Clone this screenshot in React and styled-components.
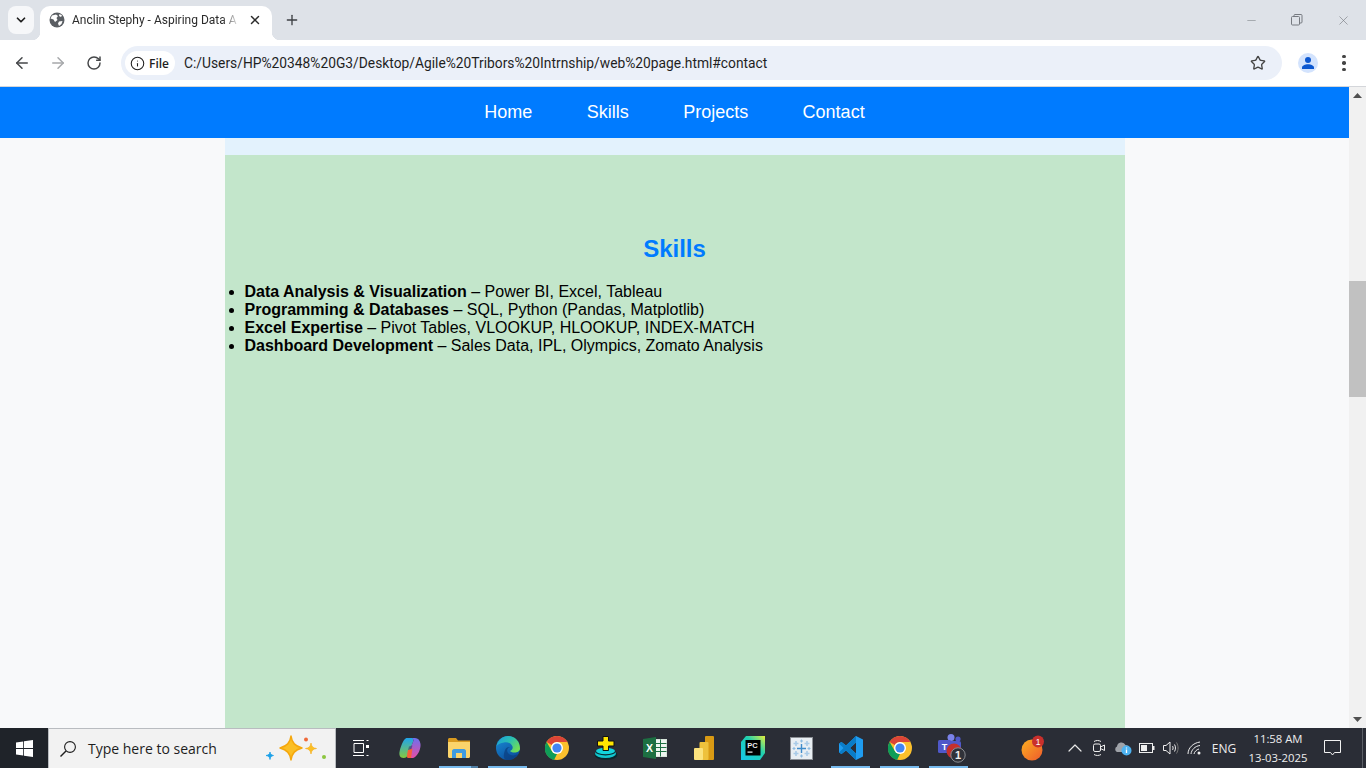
import React from "react";
import styled, { createGlobalStyle } from "styled-components";
import { ArrowLeft, ArrowRight, RotateCw, Star, Info, X, Plus, ChevronDown, Minus, ChevronUp } from "lucide-react";

const GlobalStyle = createGlobalStyle`
  html, body {
    margin: 0;
    padding: 0;
    height: 100%;
    overflow: hidden;
  }
  #root {
    height: 100%;
  }
`;

const Screen = styled.div`
  width: 1366px;
  height: 768px;
  display: flex;
  flex-direction: column;
  overflow: hidden;
  font-family: "Liberation Sans", Arial, sans-serif;
`;

/* browser tab strip */
const TabStrip = styled.div`
  height: 40px;
  flex: none;
  display: flex;
  align-items: flex-end;
  background: #dee2e8;
  padding-left: 8px;
`;

const TabSearch = styled.div`
  width: 26px;
  height: 28px;
  margin-bottom: 6px;
  margin-right: 6px;
  border-radius: 8px;
  background: #f6f7f9;
  display: flex;
  align-items: center;
  justify-content: center;
  color: #1f1f1f;
`;

const Tab = styled.div`
  position: relative;
  width: 232px;
  height: 34px;
  box-sizing: border-box;
  padding: 0 9px 6px 9px;
  display: flex;
  align-items: center;
  background: #fff;
  border-radius: 10px 10px 0 0;
  &::before,
  &::after {
    content: "";
    position: absolute;
    bottom: 0;
    width: 8px;
    height: 8px;
    background: radial-gradient(circle at 0 0, #dee2e8 8px, #fff 8.5px);
  }
  &::before {
    left: -8px;
  }
  &::after {
    right: -8px;
    transform: scaleX(-1);
  }
`;

const TabTitle = styled.span`
  width: 168px;
  margin-left: 7px;
  overflow: hidden;
  white-space: nowrap;
  font-family: Roboto, sans-serif;
  font-size: 12px;
  color: #2b2b2b;
  -webkit-mask-image: linear-gradient(to right, #000 150px, transparent 168px);
  mask-image: linear-gradient(to right, #000 150px, transparent 168px);
`;

const TabClose = styled.div`
  margin-left: auto;
  display: flex;
  color: #2b2b2b;
  margin-right: 1px;
`;

const NewTab = styled.div`
  margin: 0 0 12px 12px;
  display: flex;
  color: #3c3f43;
`;

const WindowControls = styled.div`
  margin-left: auto;
  align-self: stretch;
  display: flex;
  align-items: center;
`;

const WindowButton = styled.div`
  width: 46px;
  height: 40px;
  display: flex;
  align-items: center;
  justify-content: center;
  color: #767a80;
`;

/* address bar row */
const Toolbar = styled.div`
  height: 46px;
  flex: none;
  display: flex;
  align-items: center;
  background: #fff;
  border-radius: 8px 8px 0 0;
  border-bottom: 1px solid #d4d6da;
  padding-left: 4px;
`;

const NavButton = styled.div`
  width: 36px;
  height: 36px;
  display: flex;
  align-items: center;
  justify-content: center;
  color: ${(p) => (p.$disabled ? "#a6a8ab" : "#454749")};
`;

const Omnibox = styled.div`
  width: 1161px;
  height: 34px;
  margin-left: 9px;
  box-sizing: border-box;
  padding: 0 16px 0 4px;
  display: flex;
  align-items: center;
  background: #ebf0f9;
  border-radius: 17px;
  font-family: Roboto, sans-serif;
`;

const SchemeChip = styled.div`
  width: 50px;
  height: 24px;
  box-sizing: border-box;
  padding-left: 5px;
  display: flex;
  align-items: center;
  gap: 4px;
  background: #fff;
  border-radius: 12px;
  font-family: "Open Sans", sans-serif;
  font-size: 12px;
  font-weight: 600;
  color: #1f1f1f;
`;

const UrlText = styled.span`
  margin-left: 9px;
  font-size: 13.8px;
  color: #1f1f1f;
`;

const OmniStar = styled.div`
  margin-left: auto;
  display: flex;
  color: #444;
`;

const Avatar = styled.div`
  width: 20px;
  height: 20px;
  margin-left: 16px;
  border-radius: 50%;
  background: #d3e3fd;
  display: flex;
  align-items: center;
  justify-content: center;
`;

const MenuDots = styled.div`
  margin-left: 24px;
  display: flex;
  flex-direction: column;
  gap: 3px;
  span {
    width: 3.5px;
    height: 3.5px;
    border-radius: 50%;
    background: #444;
  }
`;

/* the page itself */
const Viewport = styled.div`
  flex: 1;
  min-height: 0;
  display: flex;
  background: #f8f9fa;
`;

const PageColumn = styled.div`
  flex: 1;
  min-width: 0;
  display: flex;
  flex-direction: column;
`;

const Nav = styled.nav`
  height: 51px;
  flex: none;
  display: flex;
  align-items: center;
  justify-content: center;
  gap: 54.4px;
  background: #007bff;
`;

const NavLink = styled.a`
  font-size: 18px;
  color: #fff;
  text-decoration: none;
`;

const Content = styled.main`
  width: 900px;
  flex: 1;
  margin: 0 auto;
  display: flex;
  flex-direction: column;
  background: #e3f2fd;
  padding-top: 17px;
`;

const SkillsSection = styled.section`
  flex: 1;
  background: #c3e6cb;
  padding: 80px 0 0;
`;

const SectionTitle = styled.h2`
  margin: 0 0 20px;
  text-align: center;
  font-size: 24px;
  line-height: 28px;
  font-weight: bold;
  color: #007bff;
`;

const SkillList = styled.ul`
  margin: 0;
  padding: 0 0 0 20px;
  font-size: 16px;
  line-height: 18px;
  color: #000;
`;

const Scrollbar = styled.div`
  width: 17px;
  flex: none;
  display: flex;
  flex-direction: column;
  background: #f1f1f1;
`;

const ScrollArrow = styled.div`
  height: 17px;
  flex: none;
  display: flex;
  align-items: center;
  justify-content: center;
  margin-top: ${(p) => (p.$down ? "auto" : "0")};
`;

const ScrollThumb = styled.div`
  height: 116px;
  flex: none;
  margin-top: 177px;
  background: #c1c1c1;
`;

/* windows taskbar */
const Taskbar = styled.div`
  height: 40px;
  flex: none;
  display: flex;
  align-items: stretch;
  background: #2a2d36;
`;

const StartButton = styled.div`
  width: 48px;
  flex: none;
  display: flex;
  align-items: center;
  justify-content: center;
  background: #1f2329;
`;

const SearchBox = styled.div`
  width: 288px;
  flex: none;
  box-sizing: border-box;
  padding: 0 8px 0 10px;
  display: flex;
  align-items: center;
  background: #f2f2f2;
  border: 1px solid #b9bcc0;
  border-bottom: none;
  font-family: "Open Sans", sans-serif;
  font-size: 14px;
  color: #1e1e1e;
`;

const SearchLabel = styled.span`
  margin-left: 11px;
`;

const SearchSpark = styled.div`
  margin-left: auto;
  display: flex;
`;

const TaskButton = styled.div`
  position: relative;
  width: 49px;
  flex: none;
  display: flex;
  align-items: center;
  justify-content: center;
  &::after {
    content: "";
    display: ${(p) => (p.$open || p.$stacked ? "block" : "none")};
    position: absolute;
    left: 5px;
    right: 5px;
    bottom: 0;
    height: 2px;
    background: ${(p) =>
      p.$stacked
        ? "linear-gradient(to right, #76b9ed 32px, #4f7da3 32px)"
        : "#76b9ed"};
  }
`;

const Tray = styled.div`
  margin-left: auto;
  display: flex;
  align-items: center;
  color: #e8e8e8;
`;

const TrayIcon = styled.div`
  width: ${(p) => p.$w || 24}px;
  margin-left: ${(p) => p.$gap || 0}px;
  display: flex;
  align-items: center;
  justify-content: center;
`;

const LangLabel = styled.span`
  width: 34px;
  text-align: center;
  font-family: "Open Sans", sans-serif;
  font-size: 12px;
  color: #eee;
`;

const Clock = styled.div`
  width: 74px;
  text-align: center;
  font-family: "Open Sans", sans-serif;
  font-size: 11.3px;
  line-height: 19px;
  color: #eee;
`;

const DesktopEdge = styled.div`
  width: 1px;
  height: 100%;
  margin-left: 13px;
  margin-right: 3px;
  background: #5b5f66;
`;

const skills = [
  ["Data Analysis & Visualization", "Power BI, Excel, Tableau"],
  ["Programming & Databases", "SQL, Python (Pandas, Matplotlib)"],
  ["Excel Expertise", "Pivot Tables, VLOOKUP, HLOOKUP, INDEX-MATCH"],
  ["Dashboard Development", "Sales Data, IPL, Olympics, Zomato Analysis"],
];

const GlobeIcon = () => (
  <svg width="16" height="16" viewBox="0 0 16 16">
    <circle cx="8" cy="8" r="7.5" fill="#5a5e63" />
    <path d="M3 3.5 7 2.5 9 4 7.5 6 8.5 8 6 10 4.5 7.5 1.5 6.5Z" fill="#fff" />
    <path d="M10 9.5 13.5 9 12.5 12 10 14 9 11.5Z" fill="#fff" />
    <path d="M10.5 2 13 3.5 12 5 10 4Z" fill="#fff" />
  </svg>
);

const RestoreIcon = () => (
  <svg width="12" height="12" viewBox="0 0 12 12" fill="none" stroke="currentColor">
    <rect x="0.5" y="2.5" width="8" height="8.5" rx="1" />
    <path d="M3 2.5V1.5a1 1 0 0 1 1-1h6a1 1 0 0 1 1 1V8a1 1 0 0 1-1 1H8.5" />
  </svg>
);

const PersonIcon = () => (
  <svg width="14" height="14" viewBox="0 0 14 14" fill="#0b57d0">
    <circle cx="7" cy="4" r="3" />
    <path d="M1 13v-1.5C1 9.5 4 8.2 7 8.2s6 1.3 6 3.3V13Z" />
  </svg>
);

const WindowsLogo = () => (
  <svg width="17" height="17" viewBox="0 0 17 17" fill="#fff">
    <path d="M0 2.4 7.2 1.4V8H0Z" />
    <path d="M8 1.3 17 0V8H8Z" />
    <path d="M0 9H7.2V15.6L0 14.6Z" />
    <path d="M8 9H17V17L8 15.7Z" />
  </svg>
);

const SearchGlass = () => (
  <svg width="18" height="18" viewBox="0 0 18 18" fill="none" stroke="#1e1e1e" strokeWidth="1.1">
    <circle cx="11" cy="7" r="5.4" />
    <path d="M7 11 1.5 16.5" strokeWidth="1.4" />
  </svg>
);

const Sparkles = () => (
  <svg width="62" height="28" viewBox="0 0 62 28">
    <path d="M26 1C27 8 30 11 37 13 30 15 27 18 26 25 25 18 22 15 15 13 22 11 25 8 26 1Z" fill="#fbbf24" stroke="#f5a70c" strokeWidth="1.5" strokeLinejoin="round" />
    <path d="M46 8C46.5 11.5 48 13 51.5 13.5 48 14 46.5 15.5 46 19 45.5 15.5 44 14 40.5 13.5 44 13 45.5 11.5 46 8Z" fill="#fbbf24" stroke="#f5a70c" strokeWidth=".6" />
    <path d="M5 17C5.4 19 6 20 8.5 20.5 6 21 5.4 22 5 24.5 4.6 22 4 21 1 20.5 4 20 4.6 19 5 17Z" fill="#1da1e8" stroke="#1da1e8" strokeWidth=".8" />
    <circle cx="41" cy="4.5" r="2" fill="#ef6a3a" />
    <circle cx="59" cy="22" r="2" fill="#8cc63f" />
  </svg>
);

const TaskViewIcon = () => (
  <svg width="16" height="16" viewBox="0 0 16 16" fill="none" stroke="#fff" strokeWidth="1">
    <path d="M0 .5H11M0 15.5H11" />
    <path d="M1 3.5H10.5V12.5H1Z" />
    <path d="M13.5 .5H15.5M13.5 15.5H15.5" />
    <rect x="13" y="5" width="3" height="3" fill="#fff" stroke="none" />
  </svg>
);

const CopilotIcon = () => (
  <svg width="24" height="24" viewBox="0 0 24 24">
    <defs>
      <linearGradient id="cpA" x1="0.3" y1="0" x2="0.3" y2="1">
        <stop offset="0" stopColor="#1fa5ec" />
        <stop offset="1" stopColor="#86c83f" />
      </linearGradient>
      <linearGradient id="cpB" x1="0.5" y1="0" x2="0.5" y2="1">
        <stop offset="0" stopColor="#6d70ee" />
        <stop offset="1" stopColor="#e64da5" />
      </linearGradient>
    </defs>
    <path d="M9 2H14C15.5 2 15.5 3.5 15 6L10 19C9 21 8 22 5.5 22 2 22 1 19 1.5 16 2 12 5 5 6.5 3.5 7.5 2.5 8 2 9 2Z" fill="url(#cpA)" />
    <path d="M14 2H17C20 2 22 4 22.5 8 23 13 20 19 17 21 16 22 15 22 11 22 9 22 9 20 10 18L15 6C16 4 15 2.5 14 2Z" fill="url(#cpB)" />
    <path d="M10 14 14.5 12.5 13 22H10C8.5 22 9 18 10 14Z" fill="#f5603a" />
    <path d="M11 10.5 14.5 9.5 13.5 13 10 14Z" fill="#3a2f6e" opacity="0.55" />
  </svg>
);

const ExplorerIcon = () => (
  <svg width="22" height="20" viewBox="0 0 22 20">
    <path d="M0 1.5C0 .7.7 0 1.5 0H8L10 2.5H22V5H0Z" fill="#d99a1f" />
    <path d="M0 4H22V18.5C22 19.3 21.3 20 20.5 20H1.5C.7 20 0 19.3 0 18.5Z" fill="#fbd46b" />
    <path d="M4 20V13C4 12 5 11 6 11H16C17 11 18 12 18 13V20H14V15H8V20Z" fill="#3f9be0" />
  </svg>
);

const EdgeIcon = () => (
  <svg width="24" height="24" viewBox="0 0 24 24">
    <defs>
      <linearGradient id="edA" x1="0" y1="0" x2="1" y2="0.6">
        <stop offset="0" stopColor="#1a9be0" />
        <stop offset="0.55" stopColor="#2bc0b0" />
        <stop offset="1" stopColor="#6fdc58" />
      </linearGradient>
      <linearGradient id="edB" x1="0" y1="0" x2="0.6" y2="1">
        <stop offset="0" stopColor="#1a8fd8" />
        <stop offset="1" stopColor="#0b4f9e" />
      </linearGradient>
    </defs>
    <circle cx="12" cy="12" r="12" fill="url(#edB)" />
    <path d="M0.5 10C2 4 7 0 12 0 19 0 24 5.5 24 12.5 24 15 21.5 16.5 18.5 16.5 16 16.5 14.5 15.8 14 15 16.5 14 17 12 16.5 10.5 15 6.5 11 6 8 6.5 4.5 7 2 8 .5 10Z" fill="url(#edA)" />
    <path d="M11 24C6 23 8 17 9 14 10 11.5 12 10.5 14 11 11 12 10.5 15 12 17 14 20 19 20 22 18 20 22 15 24.5 11 24Z" fill="#0c3d7d" opacity="0.7" />
  </svg>
);

const ChromeIcon = () => (
  <svg width="24" height="24" viewBox="0 0 24 24">
    <circle cx="12" cy="12" r="12" fill="#fbc02d" />
    <path d="M12 0A12 12 0 0 1 22.4 6H12A6 6 0 0 0 6.8 9L1.6 6A12 12 0 0 1 12 0Z" fill="#dc4437" />
    <path d="M1.6 6 6.8 15A6 6 0 0 0 12 18L9 24A12 12 0 0 1 1.6 6Z" fill="#0f9d58" />
    <circle cx="12" cy="12" r="6" fill="#fff" />
    <circle cx="12" cy="12" r="4.6" fill="#4285f4" />
  </svg>
);

const PlusDiskIcon = () => (
  <svg width="24" height="24" viewBox="0 0 24 24">
    <ellipse cx="12" cy="19" rx="11.5" ry="4.8" fill="#08282e" />
    <ellipse cx="11.5" cy="17.8" rx="10.5" ry="4.2" fill="#12c6cf" />
    <ellipse cx="11.5" cy="15.8" rx="10" ry="3.6" fill="#08282e" />
    <ellipse cx="11.5" cy="15" rx="9.5" ry="3.2" fill="#12d4dc" />
    <path d="M9 .5H14.5V5H20V10H14.5V14.5H9V10H3.5V5H9Z" fill="#ffe600" stroke="#111" strokeWidth="1" />
  </svg>
);

const ExcelIcon = () => (
  <svg width="24" height="22" viewBox="0 0 24 22">
    <rect x="12" y="2.5" width="11.5" height="17" fill="#eef5f0" stroke="#d7e4db" />
    <path d="M17.5 2.5V19.5M12 6.5H23.5M12 10.5H23.5M12 14.5H23.5" stroke="#1d6f42" strokeWidth="1" />
    <path d="M0 2 13 0V22L0 20Z" fill="#1d6f42" />
    <text x="6.5" y="15" textAnchor="middle" fontFamily="Liberation Sans" fontWeight="bold" fontSize="10.5" fill="#fff">X</text>
  </svg>
);

const PowerBiIcon = () => (
  <svg width="20" height="24" viewBox="0 0 20 24">
    <rect x="11" y="0" width="9" height="24" rx="1" fill="#d99a14" />
    <rect x="5.5" y="6" width="9" height="18" rx="1" fill="#eec13c" />
    <rect x="0" y="12" width="9" height="12" rx="1" fill="#fbe27d" />
  </svg>
);

const PyCharmIcon = () => (
  <svg width="24" height="24" viewBox="0 0 24 24">
    <defs>
      <linearGradient id="pcA" x1="0" y1="1" x2="1" y2="0">
        <stop offset="0" stopColor="#16c5ea" />
        <stop offset="0.6" stopColor="#20d0b0" />
        <stop offset="1" stopColor="#e6ee3a" />
      </linearGradient>
    </defs>
    <path d="M5 0H24V17L19 24H0V6Z" fill="url(#pcA)" />
    <rect x="4.5" y="4" width="15" height="15.5" fill="#000" />
    <text x="11.5" y="12" textAnchor="middle" fontFamily="Liberation Sans" fontWeight="bold" fontSize="7.5" fill="#eee">PC</text>
    <rect x="6.5" y="15.5" width="5" height="1.2" fill="#eee" />
  </svg>
);

const TableauIcon = () => (
  <svg width="23" height="23" viewBox="0 0 23 23">
    <rect x=".5" y=".5" width="22" height="22" fill="#e8eef3" stroke="#8b8f95" />
    <g stroke="#a9cbe8" strokeWidth="1.6">
      <path d="M6 4V9M3.5 6.5H8.5M17 4V9M14.5 6.5H19.5M6 14V19M3.5 16.5H8.5M17 14V19M14.5 16.5H19.5" />
      <path d="M11.5 2.5V5.5M10 4H13M11.5 17.5V20.5M10 19H13M2.5 11.5H5.5M4 10V13M17.5 11.5H20.5M19 10V13" stroke="#8dbbe0" strokeWidth="1.1" />
    </g>
    <path d="M11.5 7V16M7 11.5H16" stroke="#3f8ccb" strokeWidth="1.4" />
  </svg>
);

const VsCodeIcon = () => (
  <svg width="24" height="24" viewBox="0 0 24 24">
    <path d="M17 0 24 3.5V20.5L17 24 7 14.5 2.5 18 0 16.5V7.5L2.5 6 7 9.5ZM17 6.5 11 12 17 17.5Z" fill="#1f9cf0" />
    <path d="M17 0V6.5L11 12 17 17.5V24L7 14.5 2.5 18 0 16.5 4.5 12 0 7.5 2.5 6 7 9.5Z" fill="#0a7cc7" />
  </svg>
);

const TeamsIcon = () => (
  <svg width="34" height="30" viewBox="0 0 34 30">
    <circle cx="19" cy="4.5" r="3.5" fill="#7b83eb" />
    <circle cx="26" cy="6" r="2.6" fill="#5059c9" />
    <rect x="17" y="8" width="12" height="11" rx="2" fill="#5059c9" />
    <rect x="6" y="7" width="13" height="13" rx="1.5" fill="#4f58ca" />
    <text x="12.5" y="17" textAnchor="middle" fontFamily="Liberation Sans" fontWeight="bold" fontSize="9" fill="#fff">T</text>
    <circle cx="22" cy="18" r="7.5" fill="#c4302b" />
    <circle cx="26" cy="22" r="7.2" fill="#303239" stroke="#8a8d92" strokeWidth="1" />
    <text x="26" y="26" textAnchor="middle" fontFamily="Liberation Sans" fontWeight="bold" fontSize="11" fill="#eee">1</text>
  </svg>
);

const OrangeBadge = () => (
  <svg width="26" height="28" viewBox="0 0 26 28">
    <defs>
      <linearGradient id="orA" x1="0" y1="0" x2="1" y2="1">
        <stop offset="0" stopColor="#fbb021" />
        <stop offset="1" stopColor="#ee5a2c" />
      </linearGradient>
    </defs>
    <circle cx="11" cy="16" r="10.5" fill="url(#orA)" />
    <circle cx="17" cy="7.5" r="6" fill="#c9302c" />
    <text x="17" y="10.5" textAnchor="middle" fontFamily="Liberation Sans" fontSize="8.5" fill="#fff">1</text>
  </svg>
);

const MeetIcon = () => (
  <svg width="14" height="18" viewBox="0 0 14 18" fill="none" stroke="#eee" strokeWidth="1">
    <rect x="1.5" y="5" width="7" height="7.5" rx="1.5" />
    <path d="M8.5 8 12.5 6V11.5L8.5 9.5" />
    <path d="M2 2.5C4 1.2 7 1.2 9 2.5M2 15.5C4 16.8 7 16.8 9 15.5" />
  </svg>
);

const CloudInfoIcon = () => (
  <svg width="18" height="16" viewBox="0 0 18 16">
    <path d="M3 12A3 3 0 0 1 3 6.5 4.5 4.5 0 0 1 11.5 5 3.5 3.5 0 0 1 14 11V12Z" fill="#9ea2a8" />
    <circle cx="12.5" cy="10.5" r="5" fill="#4db2f0" />
    <path d="M12.5 9.5V13M12.5 7.5V8.6" stroke="#fff" strokeWidth="1.3" />
  </svg>
);

const BatteryIcon = () => (
  <svg width="16" height="10" viewBox="0 0 16 10" fill="none">
    <rect x=".5" y=".5" width="13" height="9" stroke="#eee" />
    <rect x="2" y="2" width="6" height="6" fill="#eee" />
    <rect x="14" y="3" width="1.5" height="4" fill="#eee" />
  </svg>
);

const VolumeIcon = () => (
  <svg width="16" height="14" viewBox="0 0 16 14" fill="none" stroke="#eee" strokeWidth="1">
    <path d="M.5 4.5H3L7 1V13L3 9.5H.5Z" />
    <path d="M9.5 5C10.3 6 10.3 8 9.5 9M11.5 3.5C12.8 5.5 12.8 8.5 11.5 10.5" />
    <path d="M13.5 1.5C15.6 5 15.6 9 13.5 12.5" stroke="#777" />
  </svg>
);

const WifiIcon = () => (
  <svg width="16" height="14" viewBox="0 0 16 14" fill="none" stroke="#eee" strokeWidth="1">
    <path d="M1 13C1 7 6 2 13 1" />
    <path d="M4 13C4.3 9 8 5 13 4.5" />
    <path d="M7 13C7.3 11 9.5 8.5 12 8" />
    <circle cx="12" cy="12" r="1.5" fill="#eee" stroke="none" />
  </svg>
);

const NotificationIcon = () => (
  <svg width="17" height="16" viewBox="0 0 17 16" fill="none" stroke="#f2f2f2" strokeWidth="1">
    <path d="M.5.5H16.5V12.5H10.5L8.5 15 6.5 12.5H.5Z" />
  </svg>
);

const ScrollTriangle = ({ down }) => (
  <svg width="9" height="5" viewBox="0 0 9 5" fill="#505050">
    <path d={down ? "M0 0H9L4.5 5Z" : "M4.5 0 9 5H0Z"} />
  </svg>
);

function App() {
  return (
    <Screen>
      <GlobalStyle />
      <TabStrip>
        <TabSearch>
          <ChevronDown size={14} strokeWidth={3} />
        </TabSearch>
        <Tab>
          <GlobeIcon />
          <TabTitle>Anclin Stephy - Aspiring Data A</TabTitle>
          <TabClose>
            <X size={14} strokeWidth={2.5} />
          </TabClose>
        </Tab>
        <NewTab>
          <Plus size={16} strokeWidth={2} />
        </NewTab>
        <WindowControls>
          <WindowButton>
            <Minus size={13} strokeWidth={1} />
          </WindowButton>
          <WindowButton>
            <RestoreIcon />
          </WindowButton>
          <WindowButton>
            <X size={15} strokeWidth={1} />
          </WindowButton>
        </WindowControls>
      </TabStrip>

      <Toolbar>
        <NavButton>
          <ArrowLeft size={18} strokeWidth={2} />
        </NavButton>
        <NavButton $disabled>
          <ArrowRight size={18} strokeWidth={2} />
        </NavButton>
        <NavButton>
          <RotateCw size={16} strokeWidth={2.2} />
        </NavButton>
        <Omnibox>
          <SchemeChip>
            <Info size={15} strokeWidth={1.7} />
            File
          </SchemeChip>
          <UrlText>C:/Users/HP%20348%20G3/Desktop/Agile%20Tribors%20Intrnship/web%20page.html#contact</UrlText>
          <OmniStar>
            <Star size={16} strokeWidth={2} />
          </OmniStar>
        </Omnibox>
        <Avatar>
          <PersonIcon />
        </Avatar>
        <MenuDots>
          <span />
          <span />
          <span />
        </MenuDots>
      </Toolbar>

      <Viewport>
        <PageColumn>
          <Nav>
            <NavLink href="#home">Home</NavLink>
            <NavLink href="#skills">Skills</NavLink>
            <NavLink href="#projects">Projects</NavLink>
            <NavLink href="#contact">Contact</NavLink>
          </Nav>
          <Content>
            <SkillsSection>
              <SectionTitle>Skills</SectionTitle>
              <SkillList>
                {skills.map(([name, detail]) => (
                  <li key={name}>
                    <strong>{name}</strong> – {detail}
                  </li>
                ))}
              </SkillList>
            </SkillsSection>
          </Content>
        </PageColumn>
        <Scrollbar>
          <ScrollArrow>
            <ScrollTriangle />
          </ScrollArrow>
          <ScrollThumb />
          <ScrollArrow $down>
            <ScrollTriangle down />
          </ScrollArrow>
        </Scrollbar>
      </Viewport>

      <Taskbar>
        <StartButton>
          <WindowsLogo />
        </StartButton>
        <SearchBox>
          <SearchGlass />
          <SearchLabel>Type here to search</SearchLabel>
          <SearchSpark>
            <Sparkles />
          </SearchSpark>
        </SearchBox>
        <TaskButton><TaskViewIcon /></TaskButton>
        <TaskButton><CopilotIcon /></TaskButton>
        <TaskButton $stacked><ExplorerIcon /></TaskButton>
        <TaskButton $open><EdgeIcon /></TaskButton>
        <TaskButton><ChromeIcon /></TaskButton>
        <TaskButton><PlusDiskIcon /></TaskButton>
        <TaskButton><ExcelIcon /></TaskButton>
        <TaskButton><PowerBiIcon /></TaskButton>
        <TaskButton><PyCharmIcon /></TaskButton>
        <TaskButton><TableauIcon /></TaskButton>
        <TaskButton $open><VsCodeIcon /></TaskButton>
        <TaskButton $open><ChromeIcon /></TaskButton>
        <TaskButton $open><TeamsIcon /></TaskButton>
        <Tray>
          <TrayIcon $w={28}><OrangeBadge /></TrayIcon>
          <TrayIcon $w={24} $gap={15}><ChevronUp size={24} strokeWidth={1.2} /></TrayIcon>
          <TrayIcon><MeetIcon /></TrayIcon>
          <TrayIcon><CloudInfoIcon /></TrayIcon>
          <TrayIcon><BatteryIcon /></TrayIcon>
          <TrayIcon><VolumeIcon /></TrayIcon>
          <TrayIcon><WifiIcon /></TrayIcon>
          <LangLabel>ENG</LangLabel>
          <Clock>
            11:58 AM
            <br />
            13-03-2025
          </Clock>
          <TrayIcon $w={34}><NotificationIcon /></TrayIcon>
          <DesktopEdge />
        </Tray>
      </Taskbar>
    </Screen>
  );
}

export default App;
